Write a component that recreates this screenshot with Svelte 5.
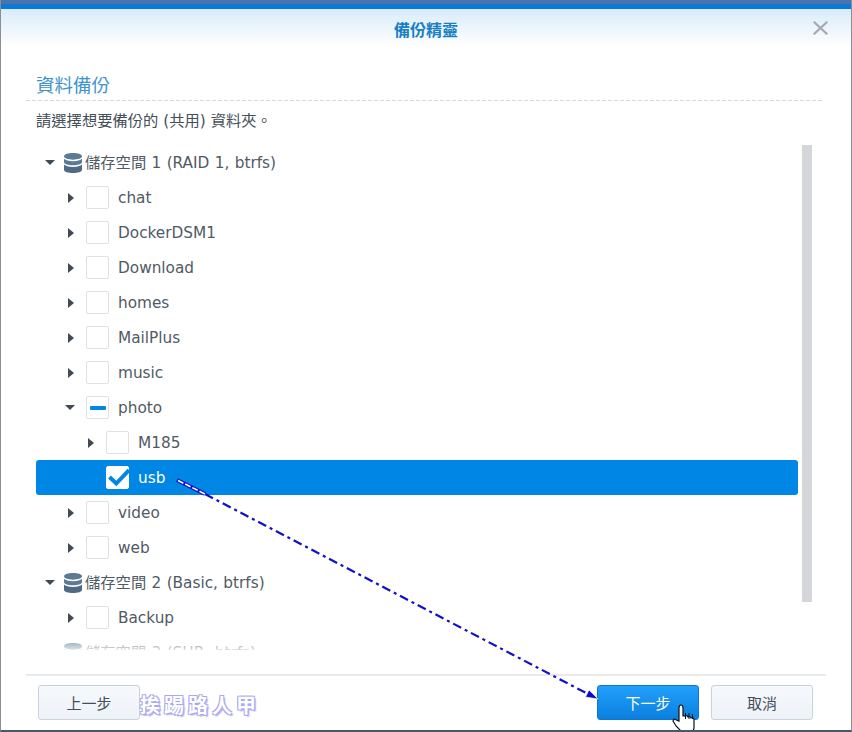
<script>
  const folders1 = [
    { name: 'chat' }, { name: 'DockerDSM1' }, { name: 'Download' }, { name: 'homes' }, { name: 'MailPlus' }, { name: 'music' }
  ];
</script>

{#snippet db()}
  <svg class="db" width="18" height="20" viewBox="0 0 19 21">
    <path fill="#5b7a94" d="M0 3.500C0 1.200 4.500 0 9.500 0S19 1.200 19 3.500 14.500 7 9.500 7 0 5.800 0 3.500Z"/>
    <path fill="#5b7a94" d="M0 6c1.500 1.800 5 2.600 9.500 2.600S17.500 7.800 19 6v3.500C19 11.800 14.500 13 9.500 13S0 11.800 0 9.500Z"/>
    <path fill="#4f6b83" d="M0 12c1.500 1.800 5 2.600 9.500 2.600S17.500 13.800 19 12v5.500C19 19.800 14.500 21 9.500 21S0 19.800 0 17.500Z"/>
  </svg>
{/snippet}

{#snippet row(name, level, arrow, check)}
  <div class="row l{level}" class:sel={check === 'on'}>
    {#if arrow === 'r'}<span class="tri-r"></span>{:else if arrow === 'd'}<span class="tri-d"></span>{:else}<span class="tri-none"></span>{/if}
    <span class="box">
      {#if check === 'on'}
        <svg width="23" height="23" viewBox="0 0 23 23"><path d="M3.500 11l6.800 6.500L23 4" fill="none" stroke="#0086e5" stroke-width="4"/></svg>
      {:else if check === 'part'}
        <span class="dash"></span>
      {/if}
    </span>
    <span class="name">{name}</span>
  </div>
{/snippet}

<div class="win">
  <div class="topbar"></div>
  <header class="head">
    <span class="title">備份精靈</span>
    <svg class="close" width="15" height="14" viewBox="0 0 15 14"><path d="M.7.700l13.600 12.600M14.300.700L.7 13.300" stroke="#a3aab1" stroke-width="2.200" fill="none"/></svg>
  </header>

  <main class="body">
    <h2 class="section">資料備份</h2>
    <p class="desc">請選擇想要備份的 (共用) 資料夾。</p>
    <div class="treewrap">
      <div class="tree">
        <div class="row vol"><span class="tri-d"></span>{@render db()}<span class="volname">儲存空間 1 (RAID 1, btrfs)</span></div>
        {#each folders1 as f}
          {@render row(f.name, 2, 'r', 'off')}
        {/each}
        {@render row('photo', 2, 'd', 'part')}
        {@render row('M185', 3, 'r', 'off')}
        {@render row('usb', 3, 'none', 'on')}
        {@render row('video', 2, 'r', 'off')}
        {@render row('web', 2, 'r', 'off')}
        <div class="row vol"><span class="tri-d"></span>{@render db()}<span class="volname">儲存空間 2 (Basic, btrfs)</span></div>
        {@render row('Backup', 2, 'r', 'off')}
        <div class="row vol"><span class="tri-d"></span>{@render db()}<span class="volname">儲存空間 3 (SHR, btrfs)</span></div>
        <div class="fade"></div>
      </div>
      <div class="scroll"><div class="thumb"></div></div>
    </div>
  </main>

  <footer class="foot">
    <button class="btn">上一步</button>
    <span class="mark">挨踢路人甲</span>
    <span class="spacer"></span>
    <button class="btn primary">下一步</button>
    <button class="btn">取消</button>
  </footer>

  <svg class="overlay" width="852" height="732" viewBox="0 0 852 732">
    <line x1="205" y1="494" x2="588" y2="694" stroke="#1010c8" stroke-width="2.200" stroke-dasharray="9 4 3 4"/>
    <line x1="177" y1="480" x2="205" y2="494" stroke="#1010c8" stroke-width="4"/>
    <line x1="178" y1="480.500" x2="205" y2="494" stroke="#fff" stroke-width="1.600" stroke-dasharray="6 2"/>
    <path d="M598 699L585.500 697 589 690z" fill="#0b0bd0" stroke="#fff" stroke-width=".6"/>
    <path d="M681 731l-5-5-3-5 1-2 5 2 0-13q0-3 2-3t2 3v8l2 0q2-1 3 1q2-1 3 1q3-1 3 2l0 8-1 4z" fill="#fff" stroke="#111" stroke-width="1.200"/>
    <path d="M685.500 713v6M689 713v6M692.500 714v5" stroke="#111" stroke-width="1"/>
  </svg>
</div>

<style>
  :global(body) { margin: 0; }
  .win {
    position: relative; width: 852px; height: 732px; box-sizing: border-box;
    display: flex; flex-direction: column; background: #fff; overflow: hidden;
    border-left: 1px solid #8b8f94; border-right: 1px solid #8b8f94; border-bottom: 2px solid #46586a;
    font-family: "DejaVu Sans", "Noto Sans CJK TC", sans-serif; color: #505a64;
  }
  .topbar { height: 9px; flex: none; background: linear-gradient(#4a74ad 0 4px, #0b79d6 4px); }
  .head {
    height: 38px; flex: none; display: flex; align-items: center; justify-content: center; position: relative;
    background: linear-gradient(#d8ecfa, #fff);
  }
  .title { font: bold 16px "Noto Sans CJK TC", sans-serif; color: #1a7fc4; margin-top: 2px; }
  .close { position: absolute; right: 23px; top: 12px; }
  .body { flex: 1; padding: 0 29px 0 35px; display: flex; flex-direction: column; min-height: 0; }
  .section {
    margin: 0 0 0 -10px; padding: 0 0 4px 10px; height: 54px; box-sizing: border-box;
    display: flex; align-items: flex-end;
    background: repeating-linear-gradient(90deg, #d8d8d8 0 4px, transparent 4px 6px) left bottom / 100% 1px no-repeat;
    font: 400 18.500px/26px "Noto Sans CJK TC", sans-serif; color: #3d93cc;
  }
  .desc { margin: 0; height: 44px; padding-top: 10px; box-sizing: border-box; font: 15.300px/20px "DejaVu Sans", "Noto Sans CJK TC", sans-serif; color: #444e58; }
  .treewrap { height: 505px; display: flex; position: relative; }
  .tree { width: 762px; height: 505px; overflow: hidden; position: relative; flex: none; }
  .scroll { margin-left: 4px; width: 10px; }
  .thumb { width: 10px; height: 457px; background: #d4d6d9; }
  .row { height: 35px; display: flex; align-items: center; font-size: 15.300px; box-sizing: border-box; }
  .vol { padding-left: 9px; }
  .l2 { padding-left: 32px; }
  .l3 { padding-left: 52px; }
  .tri-d { width: 0; height: 0; border: 5px solid transparent; border-top: 5px solid #3f4a55; border-bottom: 0; margin-right: 9px; flex: none; }
  .l2 .tri-d { margin-right: 11px; margin-left: -3px; }
  .tri-r { width: 0; height: 0; border: 5px solid transparent; border-left: 6px solid #3f4a55; border-right: 0; margin-right: 12px; flex: none; }
  .tri-none { width: 6px; margin-right: 12px; flex: none; }
  .db { flex: none; margin-right: 3px; }
  .volname { white-space: nowrap; word-spacing: 0.500px; margin-top: -3px; }
  .box {
    width: 23px; height: 23px; box-sizing: border-box; border: 1.500px solid #dde1e6; border-radius: 2px; background: #fff;
    margin-right: 9px; flex: none; display: flex; align-items: center; justify-content: center; position: relative;
  }
  .box svg { position: absolute; left: -1.500px; top: -1.500px; }
  .dash { width: 16px; height: 4px; background: #0086e5; border-radius: 1px; }
  .sel { background: #0086e5; color: #fff; border-radius: 3px; }
  .sel .box { border-color: #fff; }
  .fade { position: absolute; left: 0; right: 0; bottom: 0; height: 10px; background: linear-gradient(rgba(255,255,255,.3), rgba(255,255,255,.8)); }
  .foot {
    margin: 24px 25px 0 25px; height: 56px; flex: none; box-sizing: border-box;
    display: flex; padding: 9px 13px 0 12px; border-top: 2px solid #e8eaec; position: relative; align-items: flex-start;
  }
  .btn {
    width: 102px; height: 35px; box-sizing: border-box; border: 1px solid #c8d2dc; border-radius: 3px;
    background: linear-gradient(#f6f9fc, #eef3f8); font: 15px "Noto Sans CJK TC", sans-serif; color: #444e58; padding: 0;
  }
  .primary { background: linear-gradient(#22a0fb, #0a7fdf); border-color: #0a78d4; color: #fff; margin-right: 12px; }
  .mark {
    font: bold 20px "Noto Sans CJK TC", sans-serif; letter-spacing: 4px; color: #fff; margin: 5px 0 0 0; white-space: nowrap;
    text-shadow: 1px 1px 0 #a8a8f0, -1px -1px 0 #a8a8f0, 1px -1px 0 #a8a8f0, -1px 1px 0 #a8a8f0, 2px 2px 1px #bcbcf4;
  }
  .spacer { flex: 1; }
  .overlay { position: absolute; left: -1px; top: 0; pointer-events: none; }
</style>
